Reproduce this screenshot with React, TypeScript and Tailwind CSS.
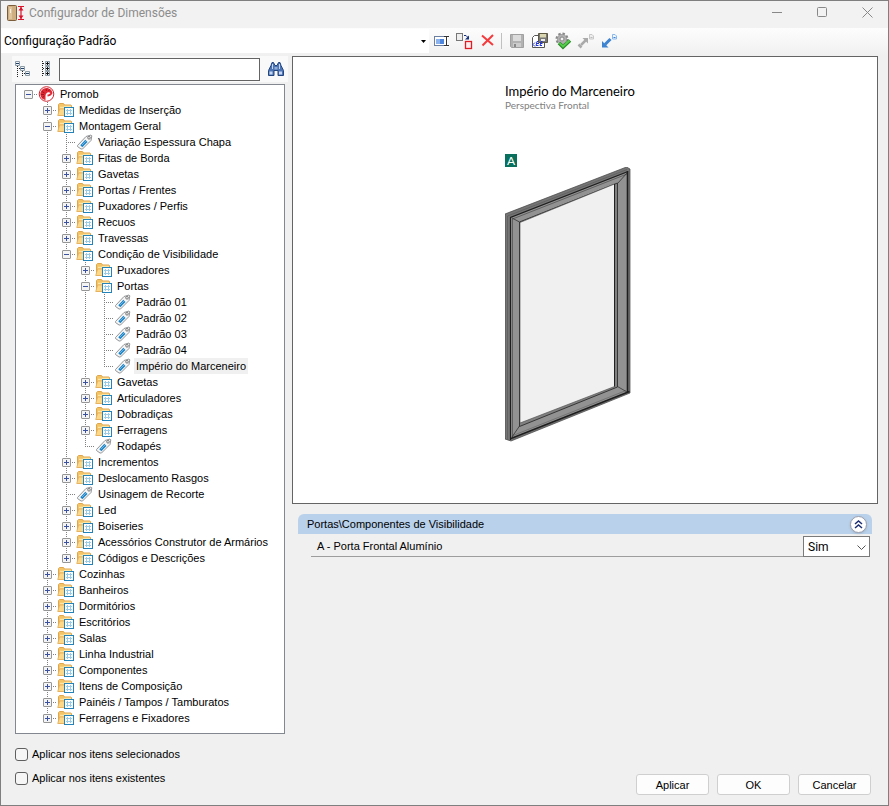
import { useState, type ReactNode } from 'react'

type TreeItem = {
  label: string
  tag?: boolean
  children?: TreeItem[]
}

const tree: TreeItem = {
  label: 'Promob',
  children: [
    { label: 'Medidas de Inserção' },
    {
      label: 'Montagem Geral',
      children: [
        { label: 'Variação Espessura Chapa', tag: true },
        { label: 'Fitas de Borda' },
        { label: 'Gavetas' },
        { label: 'Portas / Frentes' },
        { label: 'Puxadores / Perfis' },
        { label: 'Recuos' },
        { label: 'Travessas' },
        {
          label: 'Condição de Visibilidade',
          children: [
            { label: 'Puxadores' },
            {
              label: 'Portas',
              children: [
                { label: 'Padrão 01', tag: true },
                { label: 'Padrão 02', tag: true },
                { label: 'Padrão 03', tag: true },
                { label: 'Padrão 04', tag: true },
                { label: 'Império do Marceneiro', tag: true },
              ],
            },
            { label: 'Gavetas' },
            { label: 'Articuladores' },
            { label: 'Dobradiças' },
            { label: 'Ferragens' },
            { label: 'Rodapés', tag: true },
          ],
        },
        { label: 'Incrementos' },
        { label: 'Deslocamento Rasgos' },
        { label: 'Usinagem de Recorte', tag: true },
        { label: 'Led' },
        { label: 'Boiseries' },
        { label: 'Acessórios Construtor de Armários' },
        { label: 'Códigos e Descrições' },
      ],
    },
    { label: 'Cozinhas' },
    { label: 'Banheiros' },
    { label: 'Dormitórios' },
    { label: 'Escritórios' },
    { label: 'Salas' },
    { label: 'Linha Industrial' },
    { label: 'Componentes' },
    { label: 'Itens de Composição' },
    { label: 'Painéis / Tampos / Tamburatos' },
    { label: 'Ferragens e Fixadores' },
  ],
}

/* ===== TREE ICONS ===== */

function PromobIcon() {
  return (
    <svg width="17" height="16" viewBox="0 0 17 16" className="shrink-0">
      <circle cx="8.500" cy="8" r="7.300" fill="#fff" stroke="#cf2530" />
      <path d="M7.500 14C4.500 13.500 2.300 11 2.300 8S5 2 8.500 2c3.200 0 5.700 2.300 6 5.300-1.200 2.300-3 3.200-5 3.200V8.500c1.500 0 2.400-.6 3-1.500-1-.9-2.200-1-3-.5-1.300.7-2 2-2 3.500z" fill="#e02a36" />
      <path d="M4 5.500l2.500 1.500M3 8.500h3M4.500 11.500l2-1.500M8 3l.5 2M11.500 3.500l-1 1.500" stroke="#a5121b" />
    </svg>
  )
}

function FolderIcon() {
  return (
    <svg width="17" height="16" viewBox="0 0 17 16" className="shrink-0">
      <path d="M1.500 13.500v-11l1-1h4l1 1.500h6.500l.5 1v8.500z" fill="#f3c567" stroke="#dfa64e" />
      <path d="M3 5.500h4l1-1h6" stroke="#fbe6a8" strokeWidth="1.500" fill="none" />
      <path d="M.7 13.500L2.700 7h6v6.500z" fill="#fcd98a" stroke="#e3ad5c" strokeWidth=".8" />
      <rect x="7.500" y="5.500" width="9" height="9" fill="#fff" stroke="#2483b8" />
      <path d="M9 8.500h6M9 11.500h6M10.500 7v6M13.500 7v6" stroke="#9ccbe5" />
    </svg>
  )
}

function TagIcon() {
  return (
    <svg width="17" height="16" viewBox="0 0 17 16" className="shrink-0">
      <path d="M1.500 11.500L10 2.500l5-1.500.8.800L15 6.500 6.500 15H5l-3.500-2.500z" fill="#f5f5f5" stroke="#939598" />
      <path d="M4.300 11.200l5-5.400L11.500 8l-5.200 5.200z" fill="#1e86c8" />
      <path d="M6 11l4-4" stroke="#86c3e8" strokeWidth=".8" />
      <circle cx="13" cy="3.800" r="1.300" fill="#fff" stroke="#777" />
    </svg>
  )
}

const dots = { stroke: '#808080', strokeDasharray: '1 1' }

function Guide({ line }: { line: boolean }) {
  return (
    <svg width="19" height="16" className="shrink-0" aria-hidden="true">
      {line && <path d="M9.500 0v16" {...dots} />}
    </svg>
  )
}

interface JointProps {
  root: boolean
  last: boolean
  box: boolean
  expanded: boolean
}

function Joint({ root, last, box, expanded }: JointProps) {
  return (
    <svg width="19" height="16" viewBox="0 0 19 16" className="block shrink-0" aria-hidden="true">
      {!root && <path d="M9.500 0v8" {...dots} />}
      {!root && !last && <path d="M9.500 8v8" {...dots} />}
      <path d="M9 8.500h10" {...dots} />
      {box && (
        <>
          <rect x="5.500" y="4.500" width="8" height="8" rx=".5" fill="#f4f4f4" stroke="#969696" />
          <path d="M7 8.500h5" stroke="#3a52a0" />
          {!expanded && <path d="M9.500 6v5" stroke="#3a52a0" />}
        </>
      )}
    </svg>
  )
}

interface TreeRowProps {
  item: TreeItem
  guides: boolean[]
  last: boolean
  root?: boolean
  selected: string
  onSelect: (label: string) => void
}

function TreeRow({ item, guides, last, root = false, selected, onSelect }: TreeRowProps) {
  const [open, setOpen] = useState(true)
  const expanded = open && !!item.children
  const joint = <Joint root={root} last={last} box={!item.tag} expanded={expanded} />

  return (
    <li>
      <div className="flex h-4 items-center">
        {guides.map((line, i) => (
          <Guide key={i} line={line} />
        ))}
        {item.tag ? (
          joint
        ) : (
          <button type="button" aria-label={`Expandir ${item.label}`} aria-expanded={expanded} onClick={() => setOpen(!open)}>
            {joint}
          </button>
        )}
        {root ? <PromobIcon /> : item.tag ? <TagIcon /> : <FolderIcon />}
        <button
          type="button"
          onClick={() => onSelect(item.label)}
          className={`ml-[3px] h-4 whitespace-nowrap px-[2px] leading-4 ${selected === item.label ? 'bg-[#f0f0f0]' : ''}`}
        >
          {item.label}
        </button>
      </div>
      {expanded && (
        <ul>
          {item.children!.map((child, i) => (
            <TreeRow
              key={child.label}
              item={child}
              guides={[...guides, !root && !last]}
              last={i === item.children!.length - 1}
              selected={selected}
              onSelect={onSelect}
            />
          ))}
        </ul>
      )}
    </li>
  )
}

/* ===== TOOLBAR ===== */

function ToolButton({ label, children }: { label: string; children: ReactNode }) {
  return (
    <button type="button" aria-label={label} title={label} className="flex h-6 w-[23px] shrink-0 items-center justify-center">
      <svg width="18" height="18" viewBox="0 0 18 18" fill="none">
        {children}
      </svg>
    </button>
  )
}

function Toolbar() {
  return (
    <div className="flex h-7 items-center bg-linear-to-b from-[#fdfdfd] to-[#f0f0f0]">
      <div className="relative mb-[3px] h-6 w-[428px]">
        <select
          aria-label="Configuração"
          className="h-full w-full appearance-none bg-white pl-[3px] font-[Roboto,sans-serif] text-[12px]"
        >
          <option>Configuração Padrão</option>
        </select>
        <svg width="5" height="3" className="pointer-events-none absolute right-[3px] top-[11px]">
          <path d="M0 0h5L2.500 3z" fill="#000" />
        </svg>
      </div>
      <div className="mb-[3px] flex items-center">
        <ToolButton label="Renomear">
          <rect x="2.500" y="4.500" width="11" height="9" fill="#fff" stroke="#6b7fa3" />
          <rect x="4" y="7" width="8" height="5" fill="#4f86dd" />
          <path d="M4 7h4v5H4z" fill="#8cb2ee" />
          <path d="M12 4.500h4M12 13.500h4M14 5v8" stroke="#fff" strokeWidth="3" />
          <path d="M12 4.500h5M12 13.500h5M14.500 5v8" stroke="#333" />
        </ToolButton>
        <ToolButton label="Duplicar">
          <rect x="1.500" y="1.500" width="6" height="7" fill="#eee" stroke="#777" />
          <path d="M9 3.500h2l2 2" stroke="#16307d" />
          <path d="M14 3.500v4h-4z" fill="#16307d" />
          <rect x="10.500" y="9.500" width="6" height="7" fill="#fbeeee" stroke="#e01b24" strokeWidth="1.300" />
        </ToolButton>
        <ToolButton label="Excluir">
          <path d="M4 3.500l11 9.500M15 3L4.500 13.500" stroke="#f53a3c" strokeWidth="2" />
        </ToolButton>
        <span className="mx-[3px] h-4 w-px bg-[#c0c0c0]" />
        <ToolButton label="Salvar">
          <path d="M2.500 2.500h13v13h-12l-1-1z" fill="#b2b2b2" stroke="#a0a0a0" />
          <path d="M5 3h8v6H5z" fill="#dcdcdc" />
          <path d="M5 11h8v4H5z" fill="#ccc" />
          <path d="M6 12h2v3H6z" fill="#888" />
        </ToolButton>
        <ToolButton label="Salvar como">
          <path d="M1.500 5.500l2-2h10v12h-12z" fill="#fff" stroke="#555" />
          <path d="M7.500 1.500h9v9h-9z" fill="#777" stroke="#5d5940" />
          <path d="M9 2h6v3.500H9z" fill="#d9d5b0" />
          <path d="M10 7h4v2h-4z" fill="#eee" />
          <path d="M4 10.500l-2 2 2 2M7.500 9.500H6l-1 4h2.500M6 11.500h2M11.500 9.500H10l-1 4h2M9.500 11.500h2" stroke="#1c31d9" />
        </ToolButton>
        <ToolButton label="Aplicar configuração">
          <circle cx="8" cy="7" r="5" fill="#999" stroke="#888" strokeWidth="3" strokeDasharray="2.200 1.700" />
          <circle cx="8" cy="7" r="4.500" fill="#b0b0b0" />
          <circle cx="8" cy="7" r="2" fill="#f2f2f2" stroke="#888" />
          <path d="M5 11l4 4 7-6.500" stroke="#2a8a28" strokeWidth="3.600" />
          <path d="M5.500 11.200L9 14.500l6.500-6" stroke="#55cf4b" strokeWidth="1.800" />
        </ToolButton>
        <ToolButton label="Importar">
          <path d="M4 13l5-5" stroke="#aaa" strokeWidth="2.500" />
          <path d="M5.500 6h5.500v5.500z" fill="#aaa" />
          <path d="M1.500 12.500l3 3" stroke="#aaa" strokeWidth="2.500" />
          <path d="M12.500 2.500h2.500l1.500 1.500v3h-4z" fill="#eee" stroke="#c8c8c8" />
          <path d="M13.500 5.500h2" stroke="#bbb" />
        </ToolButton>
        <ToolButton label="Exportar">
          <path d="M5 12.500l5.500-5.500" stroke="#3d83d0" strokeWidth="3" />
          <path d="M2 9v6.500h6.500z" fill="#3d83d0" />
          <path d="M12.500 2.500h2.500l1.500 1.500v3h-4z" fill="#eef6ff" stroke="#8ab8ec" />
          <path d="M13.500 5.500h2" stroke="#3d83d0" />
        </ToolButton>
      </div>
    </div>
  )
}

/* ===== SEARCH BAR ===== */

function SearchBar() {
  return (
    <div className="flex h-[26px] items-center bg-[#f9f9f9]">
      <button type="button" aria-label="Recolher tudo" className="ml-px flex size-[18px] items-center justify-center">
        <svg width="16" height="16" viewBox="0 0 16 16" fill="none">
          <path d="M3.500 5v11M3 7.500h3M8.500 10v6M8 12.500h3" stroke="#222" strokeDasharray="1 1" />
          <path d="M1.500.5h4v4h-4zM6.500 5.500h4v4h-4zM11.500 10.500h4v4h-4z" fill="#eef4f8" stroke="#8b9aa5" />
          <path d="M2 2.500h3M7 7.500h3M12 12.500h3" stroke="#1f3f66" />
        </svg>
      </button>
      <button type="button" aria-label="Expandir tudo" className="ml-[6px] flex size-[18px] items-center justify-center">
        <svg width="12" height="16" viewBox="0 0 12 16" fill="none">
          <path d="M2.500 0v16M3 2.500h3M3 7.500h3M3 12.500h3" stroke="#222" strokeDasharray="1 1" />
          <path d="M5.500.5h4v4h-4zM5.500 5.500h4v4h-4zM5.500 10.500h4v4h-4z" fill="#eef4f8" stroke="#8b9aa5" />
          <path d="M6 2.500h3M6 7.500h3M6 12.500h3M7.500 1v3M7.500 6v3M7.500 11v3" stroke="#111" />
        </svg>
      </button>
      <input
        type="text"
        aria-label="Pesquisar"
        className="ml-1 h-[23px] min-w-0 flex-1 border border-[#646464] bg-white px-1 outline-none"
      />
      <button type="button" aria-label="Localizar" className="flex h-6 w-[28px] items-center justify-center pl-[3px]">
        <svg width="16" height="14" viewBox="0 0 16 14">
          <path d="M5.500.500H4l-1 3L.500 8.500v5h5.500V8.500h4v5h5.500v-5L13 3.500l-1-3h-1.500l-1.500 3h-2z" fill="#4c74b4" stroke="#23457f" />
          <path d="M6.500 5h3v2.500h-3z" fill="#8fabd8" />
          <path d="M1.500 9.500h3v3h-3zM11 9.500h3v3h-3z" fill="#c6d6f0" />
          <path d="M4.500 2v5M11.500 2v5" stroke="#c6d6f0" />
        </svg>
      </button>
    </div>
  )
}

/* ===== PREVIEW ===== */

function DoorDrawing() {
  return (
    <svg width="126" height="276" viewBox="505 167 126 276" className="block" role="img" aria-label="Porta em perspectiva">
      <path d="M505 214L626.500 167l3.500 2v224L511 441l-6-2z" fill="#757575" stroke="#444" strokeWidth=".7" />
      <path d="M511 217.500L627 172.500v219.500L511 439z" fill="#929292" />
      <path d="M507.500 440V216L627 169.500" fill="none" stroke="#5a5a5a" strokeWidth=".7" />
      <path d="M510.500 440V217.500L628 171.500" fill="none" stroke="#1e1e1e" strokeWidth="1.200" />
      <path d="M512.500 437V219L627 174" fill="none" stroke="#4a4a4a" strokeWidth=".7" />
      <path d="M627.500 171v221" stroke="#1e1e1e" strokeWidth="1.600" />
      <path d="M511 438.500L629.500 391.500" stroke="#1e1e1e" strokeWidth="1.500" />
      <path d="M513 435.500L626 390.500" stroke="#666" strokeWidth=".7" />
      <path d="M519.500 222L617.500 183v204l-98 39.500z" fill="#808080" stroke="#2c2c2c" strokeWidth=".9" />
      <path d="M520 222.500L614.500 184v202.500L520 423z" fill="#f0f0f0" stroke="#444" strokeWidth=".6" />
      <path d="M614.500 184v202.500" stroke="#222" />
      <path d="M512 218l7.500 4M627 173l-9 10M512 437l7.500-11M627 392l-9.500-5.500" stroke="#333" strokeWidth=".8" />
    </svg>
  )
}

function Preview() {
  return (
    <section className="flex h-[448px] justify-center border border-[#646464] bg-white">
      <div className="w-[160px] font-[Lato,sans-serif]">
        <h2 className="mt-[26px] whitespace-nowrap text-[13px] leading-4 text-black">Império do Marceneiro</h2>
        <p className="text-[10px] leading-3 text-[#808080]">Perspectiva Frontal</p>
        <div className="mt-[43px] flex h-[13px] w-3 items-center justify-center bg-[#08705c] text-[12px] leading-none text-white">A</div>
        <DoorDrawing />
      </div>
    </section>
  )
}

/* ===== PROPERTIES ===== */

function Properties() {
  const [open, setOpen] = useState(true)

  return (
    <section className="ml-[6px] mr-[6px] mt-[10px]">
      <header className="flex h-5 items-center justify-between rounded-t-md bg-[#b9d1ea] pl-[9px] pr-[5px]">
        <h3>Portas\Componentes de Visibilidade</h3>
        <button
          type="button"
          aria-label="Recolher seção"
          aria-expanded={open}
          onClick={() => setOpen(!open)}
          className="flex size-[17px] items-center justify-center rounded-full border border-[#9b9fae] bg-white shadow-sm"
        >
          <svg width="9" height="9" viewBox="0 0 9 9" fill="none" stroke="#1c2f73" strokeWidth="1.500">
            <path d="M1 4l3.500-3L8 4M1 8l3.500-3L8 8" />
          </svg>
        </button>
      </header>
      {open && (
        <div className="ml-[13px] mr-[2px] mt-[2px] flex">
          <label htmlFor="porta" className="flex-1 border-b border-[#9d9d9d] pl-[6px] leading-5">
            A - Porta Frontal Alumínio
          </label>
          <div className="relative">
            <select
              id="porta"
              className="h-[21px] w-[67px] appearance-none border border-[#7a7a7a] bg-white pl-1 font-[Roboto,sans-serif] text-[12px]"
            >
              <option>Sim</option>
              <option>Não</option>
            </select>
            <svg width="9" height="5" className="pointer-events-none absolute right-[4px] top-[9px]" fill="none">
              <path d="M.5.500l4 4 4-4" stroke="#555" />
            </svg>
          </div>
        </div>
      )}
    </section>
  )
}

function TitleBar() {
  return (
    <header className="flex h-[27px] items-center bg-[#f2f2f2] pl-[6px] text-[#8c8c8c]">
      <svg width="17" height="16" viewBox="0 0 17 16" className="mb-[3px]">
        <rect x=".5" y=".5" width="9" height="15" rx="1" fill="#cfae82" stroke="#7b5c3b" />
        <path d="M2 2h3v12H2z" fill="#dfc59d" />
        <path d="M3.500 4v4" stroke="#f7f1e5" />
        <path d="M11 1.500h6M11 14.500h6M14 2v12" stroke="#d9142b" strokeWidth="1.200" />
        <path d="M14 2l-2.500 3.500h5zM14 14l-2.500-3.500h5z" fill="#d9142b" />
      </svg>
      <h1 className="mb-[3px] ml-[5px] flex-1 font-[Roboto,sans-serif] text-[12px] leading-4">Configurador de Dimensões</h1>
      <div className="flex gap-[34px] pb-[4px] pr-[15px]">
        <button type="button" aria-label="Minimizar">
          <svg width="11" height="11">
            <path d="M0 5.500h10" stroke="#888" />
          </svg>
        </button>
        <button type="button" aria-label="Maximizar">
          <svg width="11" height="11" fill="none">
            <rect x=".5" y=".5" width="9" height="9" rx="1" stroke="#888" />
          </svg>
        </button>
        <button type="button" aria-label="Fechar">
          <svg width="11" height="11">
            <path d="M.5.500l10 10M10.500.5l-10 10" stroke="#888" />
          </svg>
        </button>
      </div>
    </header>
  )
}

const checkOptions = ['Aplicar nos itens selecionados', 'Aplicar nos itens existentes']
const actions = ['Aplicar', 'OK', 'Cancelar']

export default function App() {
  const [selected, setSelected] = useState('Império do Marceneiro')

  return (
    <div className="flex min-h-screen flex-col border border-[#7f7f7f] bg-[#f0f0f0] font-['Liberation_Sans',Arial,sans-serif] text-[11px] leading-4 text-black">
      <TitleBar />
      <Toolbar />

      <main className="flex flex-1 gap-[4px] pl-[11px] pr-[10px]">
        <div className="w-[276px] shrink-0">
          <SearchBar />
          <nav
            aria-label="Dimensões"
            className="ml-[3px] mr-[3px] mt-[2px] border border-[#828790] bg-white pb-[7px] pl-[3px] pt-px"
          >
            <ul>
              <TreeRow item={tree} guides={[]} last root selected={selected} onSelect={setSelected} />
            </ul>
          </nav>
        </div>
        <div className="min-w-0 flex-1">
          <Preview />
          <Properties />
        </div>
      </main>

      <footer className="flex items-end justify-between pb-[10px] pl-[14px] pr-[17px]">
        <div className="mb-[9px] flex flex-col gap-2">
          {checkOptions.map(option => (
            <label key={option} className="flex items-center gap-1">
              <input type="checkbox" className="size-[13px] appearance-none rounded-[3px] border border-[#5f5f5f] bg-[#f6f6f6] checked:bg-[#0067c0]" />
              {option}
            </label>
          ))}
        </div>
        <div className="flex gap-2">
          {actions.map(action => (
            <button key={action} type="button" className="h-[21px] w-[73px] rounded-[3px] border border-[#cfcfcf] bg-[#fdfdfd]">
              {action}
            </button>
          ))}
        </div>
      </footer>
    </div>
  )
}
